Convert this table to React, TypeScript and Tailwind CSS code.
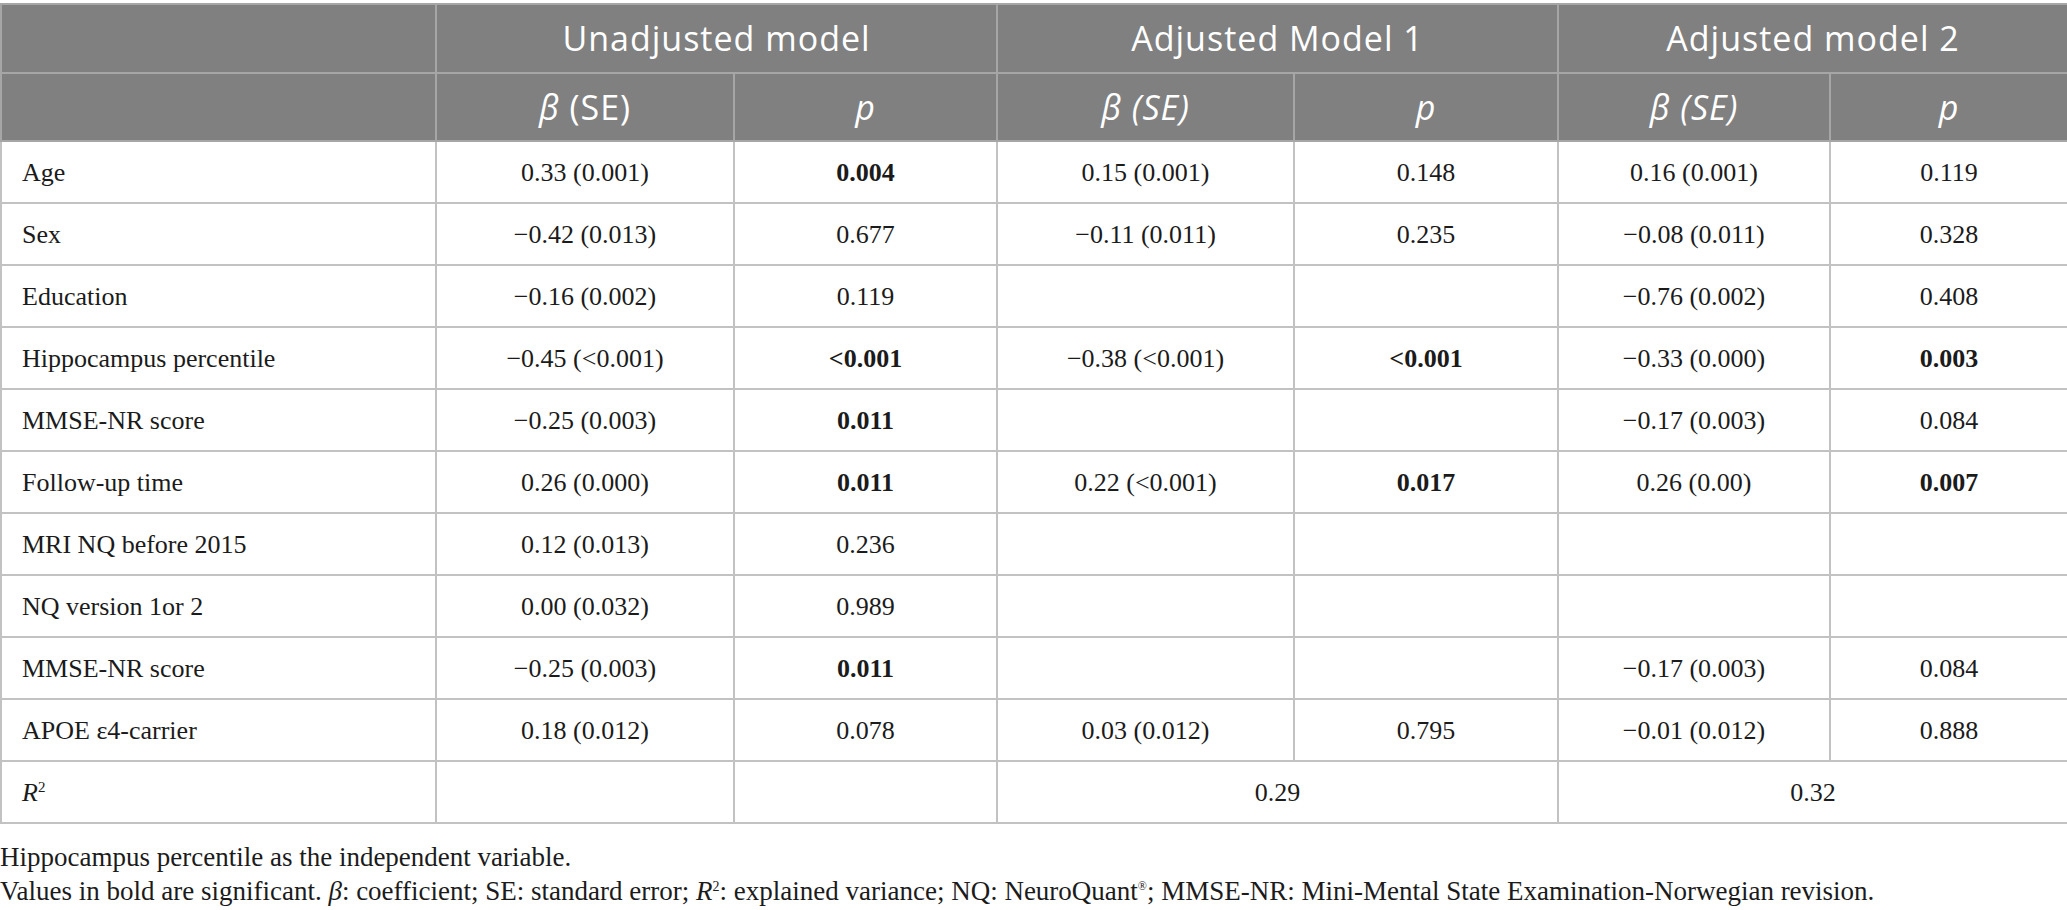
import React from "react";

type Cell = { v: string; b?: boolean };
type Row = { label: string; u: [Cell, Cell]; m1: [Cell, Cell]; m2: [Cell, Cell] };

const e: Cell = { v: "" };
const c = (v: string, b = false): Cell => ({ v, b });

const rows: Row[] = [
  { label: "Age", u: [c("0.33 (0.001)"), c("0.004", true)], m1: [c("0.15 (0.001)"), c("0.148")], m2: [c("0.16 (0.001)"), c("0.119")] },
  { label: "Sex", u: [c("−0.42 (0.013)"), c("0.677")], m1: [c("−0.11 (0.011)"), c("0.235")], m2: [c("−0.08 (0.011)"), c("0.328")] },
  { label: "Education", u: [c("−0.16 (0.002)"), c("0.119")], m1: [e, e], m2: [c("−0.76 (0.002)"), c("0.408")] },
  { label: "Hippocampus percentile", u: [c("−0.45 (<0.001)"), c("<0.001", true)], m1: [c("−0.38 (<0.001)"), c("<0.001", true)], m2: [c("−0.33 (0.000)"), c("0.003", true)] },
  { label: "MMSE-NR score", u: [c("−0.25 (0.003)"), c("0.011", true)], m1: [e, e], m2: [c("−0.17 (0.003)"), c("0.084")] },
  { label: "Follow-up time", u: [c("0.26 (0.000)"), c("0.011", true)], m1: [c("0.22 (<0.001)"), c("0.017", true)], m2: [c("0.26 (0.00)"), c("0.007", true)] },
  { label: "MRI NQ before 2015", u: [c("0.12 (0.013)"), c("0.236")], m1: [e, e], m2: [e, e] },
  { label: "NQ version 1or 2", u: [c("0.00 (0.032)"), c("0.989")], m1: [e, e], m2: [e, e] },
  { label: "MMSE-NR score", u: [c("−0.25 (0.003)"), c("0.011", true)], m1: [e, e], m2: [c("−0.17 (0.003)"), c("0.084")] },
  { label: "APOE ε4-carrier", u: [c("0.18 (0.012)"), c("0.078")], m1: [c("0.03 (0.012)"), c("0.795")], m2: [c("−0.01 (0.012)"), c("0.888")] },
];

const serif = "font-['Liberation_Serif','Times_New_Roman',serif]";
const sans = "font-['Open_Sans','Noto_Sans',sans-serif]";

function Td({ cell }: { cell: Cell }) {
  return (
    <td className={`border-2 border-[#c2c2c2] text-center ${cell.b ? "font-bold" : ""}`}>{cell.v}</td>
  );
}

const th = "border-2 border-[#a6a6a6] font-normal";

export default function App() {
  return (
    <div className="w-[2067px] bg-white pt-[3px]">
      <table className={`w-[2067px] table-fixed border-collapse text-[26px] text-[#1b1b1b] ${serif}`}>
        <colgroup>
          <col className="w-[435px]" />
          <col className="w-[298px]" />
          <col className="w-[263px]" />
          <col className="w-[297px]" />
          <col className="w-[264px]" />
          <col className="w-[272px]" />
          <col className="w-[238px]" />
        </colgroup>
        <thead className={`${sans} bg-[#808080] text-white`}>
          <tr className="h-[69px] text-[34px] tracking-[1px]">
            <th className={th}></th>
            <th colSpan={2} className={th}>Unadjusted model</th>
            <th colSpan={2} className={th}>Adjusted Model 1</th>
            <th colSpan={2} className={th}>Adjusted model 2</th>
          </tr>
          <tr className="h-[68px] text-[34px] tracking-[1px]">
            <th className={th}></th>
            <th className={th}>
              <i>β</i> (SE)
            </th>
            <th className={th}>
              <i>p</i>
            </th>
            <th className={th}>
              <i>β (SE)</i>
            </th>
            <th className={th}>
              <i>p</i>
            </th>
            <th className={th}>
              <i>β (SE)</i>
            </th>
            <th className={th}>
              <i>p</i>
            </th>
          </tr>
        </thead>
        <tbody>
          {rows.map((r, i) => (
            <tr key={i} className="h-[62px]">
              <td className="border-2 border-[#c2c2c2] pl-[20px] text-left">{r.label}</td>
              <Td cell={r.u[0]} />
              <Td cell={r.u[1]} />
              <Td cell={r.m1[0]} />
              <Td cell={r.m1[1]} />
              <Td cell={r.m2[0]} />
              <Td cell={r.m2[1]} />
            </tr>
          ))}
          <tr className="h-[62px]">
            <td className="border-2 border-[#c2c2c2] pl-[20px] text-left">
              <i>R</i>
              <span className="relative -top-[9px] text-[15px] leading-[0]">2</span>
            </td>
            <td className="border-2 border-[#c2c2c2]"></td>
            <td className="border-2 border-[#c2c2c2]"></td>
            <td colSpan={2} className="border-2 border-[#c2c2c2] text-center">0.29</td>
            <td colSpan={2} className="border-2 border-[#c2c2c2] text-center">0.32</td>
          </tr>
        </tbody>
      </table>
      <div className={`${serif} pt-[16px] text-[27px] leading-[34px] text-[#1b1b1b]`}>
        <p>Hippocampus percentile as the independent variable.</p>
        <p>
          Values in bold are significant. <i>β</i>: coefficient; SE: standard error; <i>R</i>
          <span className="relative -top-[9px] text-[14px] leading-[0]">2</span>: explained variance; NQ: NeuroQuant
          <span className="relative -top-[10px] text-[12px] leading-[0]">®</span>; MMSE-NR: Mini-Mental State Examination-Norwegian revision.
        </p>
      </div>
    </div>
  );
}
